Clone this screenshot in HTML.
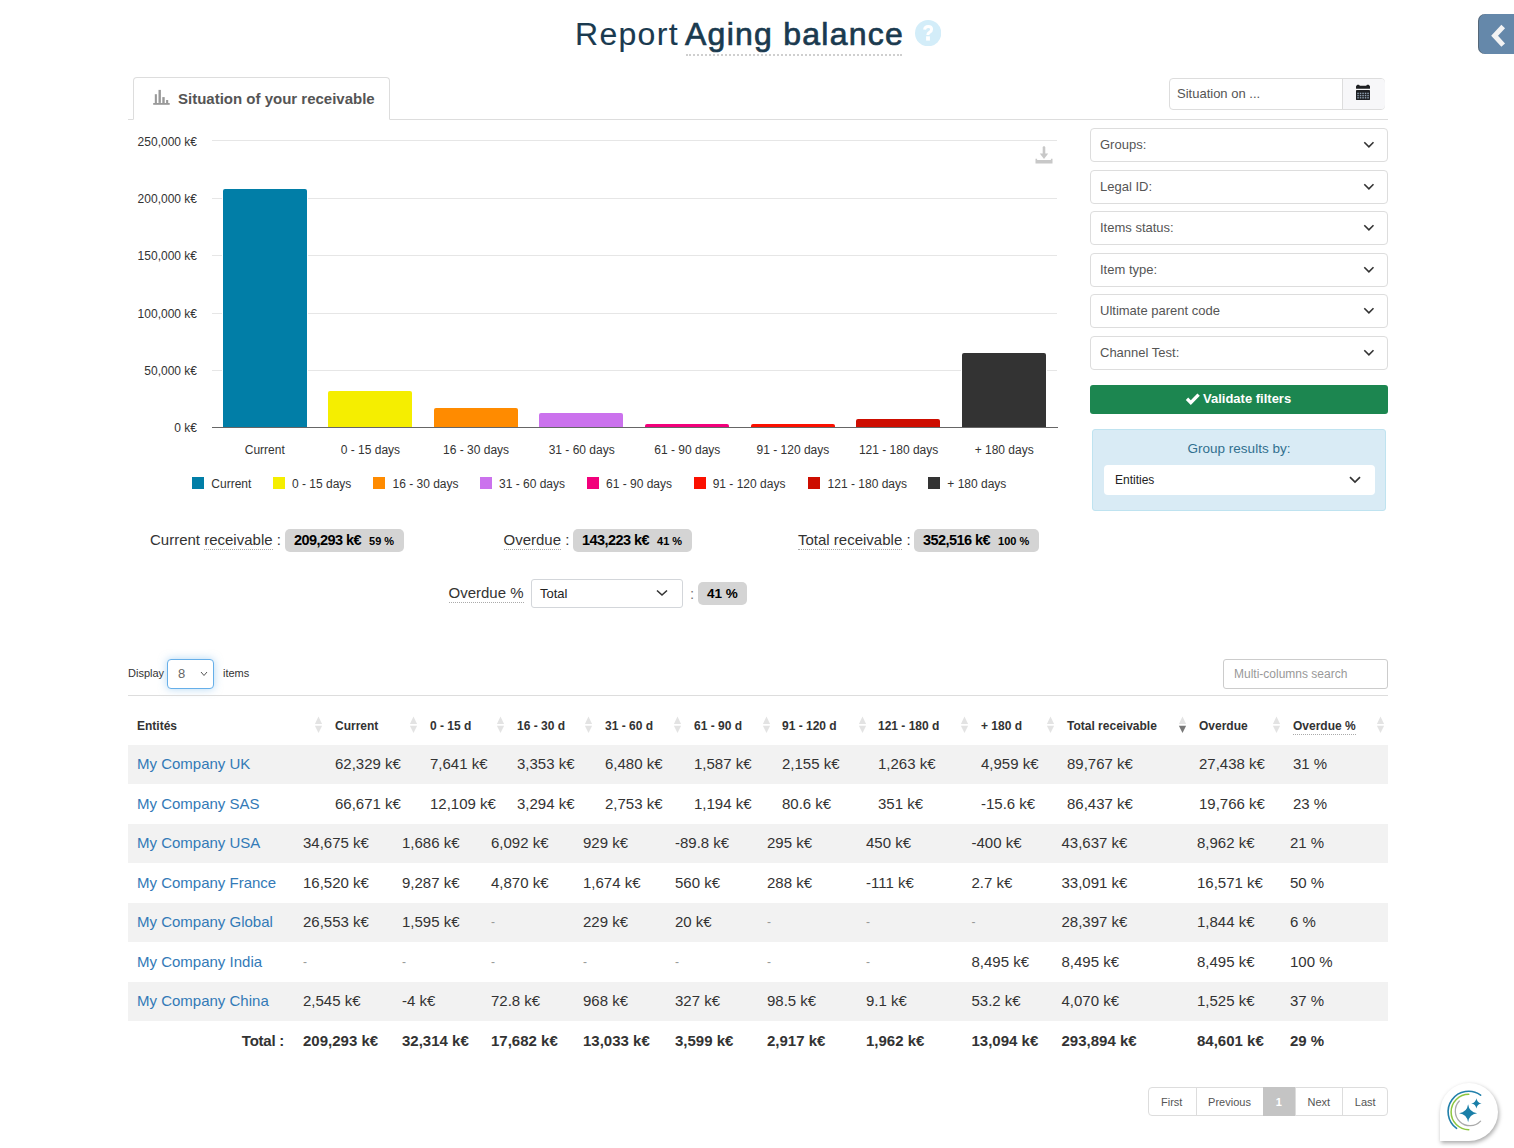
<!DOCTYPE html>
<html><head><meta charset="utf-8">
<style>
*{box-sizing:border-box}
html,body{margin:0;padding:0;width:1514px;height:1148px;overflow:hidden;background:#fff;font-family:"Liberation Sans",sans-serif;color:#333}
.a{position:absolute;white-space:nowrap}
.title{left:578px;top:12px;font-size:32px;color:#1a3a4f;line-height:44px}
.title .r{letter-spacing:1.3px;-webkit-text-stroke:0.12px #1a3a4f}
.title b{font-weight:400;-webkit-text-stroke:0.7px #1a3a4f;letter-spacing:1.25px;}
.help{left:915px;top:20px;width:26px;height:26px;border-radius:50%;background:#d3ecf9;color:#fff;font-weight:700;font-size:19px;text-align:center;line-height:26px}
.toggle{left:1478px;top:14px;width:40px;height:40px;background:#6588aa;border-radius:7px 0 0 7px;box-shadow:inset 1px 0 0 rgba(70,70,70,.5)}
.tab{left:133px;top:77px;width:257px;height:43px;border:1px solid #ddd;border-bottom:1px solid #fff;border-radius:4px 4px 0 0;background:#fff}
.tabline{left:128px;top:119px;width:1260px;height:1px;background:#ddd}
.tabtxt{left:178px;top:90px;font-size:15px;font-weight:700;color:#555;line-height:18px}
.sit{left:1169px;top:78px;width:216px;height:32px;border:1px solid #ddd;border-radius:4px;background:#fff}
.sit .t{position:absolute;left:7px;top:7px;font-size:13px;color:#555}
.sit .cal{position:absolute;left:172px;top:0;width:43px;height:30px;border-left:1px solid #ddd;background:#f7f7f9;border-radius:0 4px 4px 0}
.flt{left:1090px;width:298px;height:34px;border:1px solid #ddd;border-radius:4px;background:#fff}
.flt .t{position:absolute;left:9px;top:8px;font-size:13px;color:#555}
.chev{position:absolute}
.validate{left:1090px;top:385px;width:298px;height:29px;background:#1c8650;border-radius:3px;color:#fff;font-weight:700;font-size:13px;text-align:center;line-height:29px}
.grp{left:1092px;top:429px;width:294px;height:82px;background:#d9ebf5;border:1px solid #bfe3f0;border-radius:3px}
.grp .t{position:absolute;left:0;width:100%;text-align:center;top:11px;font-size:13.5px;color:#31708f}
.grp .sel{position:absolute;left:11px;top:35px;width:271px;height:30px;background:#fff;border-radius:4px}
.grp .sel .t2{position:absolute;left:11px;top:8px;font-size:12px;color:#222}
.ylab{font-size:12px;color:#333;text-align:right;width:80px;left:117px;line-height:14px}
.grid{left:212px;width:845px;height:1px;background:#e6e6e6}
.bar{border-radius:2px 2px 0 0;box-shadow:0 0 0 1px #fff}
.xlab{font-size:12px;color:#333;text-align:center;width:106px;line-height:14px;top:443px}
.leg{font-size:12px;color:#333;top:477px;line-height:14px}
.sq{top:477px;width:12px;height:12px}
.lbl{font-size:15px;color:#333;line-height:18px}
.dot{border-bottom:1px dotted #aaa;padding-bottom:1px}
.badge{height:23px;background:#d4d4d4;border-radius:5px;color:#000;font-weight:700;font-size:13.5px;line-height:23px;padding:0 9px}
.badge small{font-size:11px;margin-left:8px}
.th{top:719px;font-size:12px;font-weight:700;color:#333;line-height:15px}
.td{font-size:15px;color:#333;line-height:18px}
.td.b{font-weight:700}
.lnk{color:#337ab7}
.dash{color:#999;font-size:12px}
</style></head><body>

<div class="a title" style="left:575px"><span class="r">Report</span></div><div class="a title" style="left:685px"><b>Aging balance</b></div><div class="a" style="left:686px;top:54px;width:216px;height:2px;border-top:2px dotted #cfcfcf"></div>
<svg class="a" style="left:915px;top:20px" width="26.3" height="26.3" viewBox="0 0 26.3 26.3"><circle cx="13.15" cy="13.15" r="13.15" fill="#d3edf9"/><path d="M9.6 9.6 Q9.9 6.4 13.2 6.4 Q16.6 6.4 16.6 9.3 Q16.6 11.2 14.6 12.3 Q12.8 13.4 12.8 15" stroke="#fff" stroke-width="3" fill="none"/><rect x="11.1" y="16.3" width="3.8" height="4.3" fill="#fff"/></svg>
<div class="a toggle"><svg width="36" height="40" style="position:absolute;left:0;top:0"><path d="M25.2 12.5 L16.6 21.8 L25.2 31.1" stroke="#f3f3f3" stroke-width="5" fill="none" stroke-linejoin="miter"/></svg></div>

<div class="a tabline"></div>
<div class="a tab"></div>
<svg class="a" style="left:148px;top:84px" width="30" height="26" viewBox="0 0 30 26"><g fill="#999"><rect x="5.2" y="19" width="16.5" height="1.8"/><rect x="6.8" y="10.2" width="2.1" height="9"/><rect x="10.5" y="5.9" width="2.4" height="13"/><rect x="14.3" y="13.1" width="2.4" height="6"/><rect x="18.1" y="16" width="2.1" height="3"/></g></svg>
<div class="a tabtxt">Situation of your receivable</div>

<div class="a sit"><span class="t">Situation on ...</span><div class="cal">
<svg style="position:absolute;left:12px;top:5px" width="16" height="17" viewBox="0 0 16 17"><g fill="#1d1f22"><rect x="1" y="1.8" width="14" height="3" rx="0.6"/><rect x="1.6" y="0.8" width="3" height="2" rx="1"/><rect x="11.4" y="0.8" width="3" height="2" rx="1"/><rect x="1" y="6" width="14" height="10" rx="0.4"/></g><g fill="#8fa0b0" transform="translate(1,0)"><rect x="1.30" y="8.7" width="1.5" height="1.4"/><rect x="1.30" y="10.9" width="1.5" height="1.4"/><rect x="1.30" y="13.1" width="1.5" height="1.4"/><rect x="3.80" y="8.7" width="1.5" height="1.4"/><rect x="3.80" y="10.9" width="1.5" height="1.4"/><rect x="3.80" y="13.1" width="1.5" height="1.4"/><rect x="6.30" y="8.7" width="1.5" height="1.4"/><rect x="6.30" y="10.9" width="1.5" height="1.4"/><rect x="6.30" y="13.1" width="1.5" height="1.4"/><rect x="8.80" y="8.7" width="1.5" height="1.4"/><rect x="8.80" y="10.9" width="1.5" height="1.4"/><rect x="8.80" y="13.1" width="1.5" height="1.4"/><rect x="11.30" y="8.7" width="1.5" height="1.4"/><rect x="11.30" y="10.9" width="1.5" height="1.4"/><rect x="11.30" y="13.1" width="1.5" height="1.4"/></g></svg>
</div></div>

<!-- chart -->
<div class="a ylab" style="top:135.3px">250,000 k€</div>
<div class="a grid" style="top:140px"></div>
<div class="a ylab" style="top:192.4px">200,000 k€</div>
<div class="a grid" style="top:198px"></div>
<div class="a ylab" style="top:249.4px">150,000 k€</div>
<div class="a grid" style="top:255px"></div>
<div class="a ylab" style="top:307.4px">100,000 k€</div>
<div class="a grid" style="top:313px"></div>
<div class="a ylab" style="top:364.4px">50,000 k€</div>
<div class="a grid" style="top:370px"></div>
<div class="a ylab" style="top:421px">0 k€</div>
<div class="a bar" style="left:223px;top:188.8px;width:84px;height:238.2px;background:#017ea7"></div>
<div class="a xlab" style="left:211.8px">Current</div>
<div class="a bar" style="left:328px;top:390.5px;width:84px;height:36.5px;background:#f5ee00"></div>
<div class="a xlab" style="left:317.4px">0 - 15 days</div>
<div class="a bar" style="left:434px;top:407.6px;width:84px;height:19.4px;background:#ff8b00"></div>
<div class="a xlab" style="left:423.1px">16 - 30 days</div>
<div class="a bar" style="left:539px;top:412.9px;width:84px;height:14.1px;background:#cb72ed"></div>
<div class="a xlab" style="left:528.7px">31 - 60 days</div>
<div class="a bar" style="left:645px;top:423.9px;width:84px;height:3.1px;background:#f2007b"></div>
<div class="a xlab" style="left:634.3px">61 - 90 days</div>
<div class="a bar" style="left:751px;top:423.9px;width:84px;height:3.1px;background:#fb1000"></div>
<div class="a xlab" style="left:739.9px">91 - 120 days</div>
<div class="a bar" style="left:856px;top:418.6px;width:84px;height:8.4px;background:#cd0d00"></div>
<div class="a xlab" style="left:845.6px">121 - 180 days</div>
<div class="a bar" style="left:962px;top:353.1px;width:84px;height:73.9px;background:#333333"></div>
<div class="a xlab" style="left:951.2px">+ 180 days</div>
<div class="a" style="left:212px;top:426.5px;width:846px;height:1px;background:#666"></div>
<div class="a sq" style="left:192px;background:#017ea7"></div>
<div class="a leg" style="left:211.3px">Current</div>
<div class="a sq" style="left:273px;background:#f5ee00"></div>
<div class="a leg" style="left:292px">0 - 15 days</div>
<div class="a sq" style="left:373px;background:#ff8b00"></div>
<div class="a leg" style="left:392.5px">16 - 30 days</div>
<div class="a sq" style="left:480px;background:#cb72ed"></div>
<div class="a leg" style="left:499px">31 - 60 days</div>
<div class="a sq" style="left:587px;background:#f2007b"></div>
<div class="a leg" style="left:606px">61 - 90 days</div>
<div class="a sq" style="left:694px;background:#fb1000"></div>
<div class="a leg" style="left:712.7px">91 - 120 days</div>
<div class="a sq" style="left:808px;background:#cd0d00"></div>
<div class="a leg" style="left:827.6px">121 - 180 days</div>
<div class="a sq" style="left:928px;background:#333333"></div>
<div class="a leg" style="left:947.3px">+ 180 days</div>
<svg class="a" style="left:1034px;top:146px" width="20" height="18" viewBox="0 0 20 18"><g fill="#c8c8c8"><rect x="8.7" y="0.3" width="2.6" height="9" rx="1.2"/><path d="M5.8 7.6 H14.2 L10 13 Z"/><path d="M1.5 12.8 H3.1 V14 H16.9 V12.8 H18.5 V17.4 H1.5 Z"/></g></svg>
<!-- filters -->
<div class="a flt" style="top:128px"><span class="t">Groups:</span><svg class="chev" style="left:271.5px;top:12px" width="12" height="8" viewBox="0 0 12 8"><path d="M1.3 1.3 L5.9 5.8 L10.5 1.3" stroke="#333" stroke-width="1.6" fill="none"/></svg></div>
<div class="a flt" style="top:170px"><span class="t">Legal ID:</span><svg class="chev" style="left:271.5px;top:12px" width="12" height="8" viewBox="0 0 12 8"><path d="M1.3 1.3 L5.9 5.8 L10.5 1.3" stroke="#333" stroke-width="1.6" fill="none"/></svg></div>
<div class="a flt" style="top:211px"><span class="t">Items status:</span><svg class="chev" style="left:271.5px;top:12px" width="12" height="8" viewBox="0 0 12 8"><path d="M1.3 1.3 L5.9 5.8 L10.5 1.3" stroke="#333" stroke-width="1.6" fill="none"/></svg></div>
<div class="a flt" style="top:253px"><span class="t">Item type:</span><svg class="chev" style="left:271.5px;top:12px" width="12" height="8" viewBox="0 0 12 8"><path d="M1.3 1.3 L5.9 5.8 L10.5 1.3" stroke="#333" stroke-width="1.6" fill="none"/></svg></div>
<div class="a flt" style="top:294px"><span class="t">Ultimate parent code</span><svg class="chev" style="left:271.5px;top:12px" width="12" height="8" viewBox="0 0 12 8"><path d="M1.3 1.3 L5.9 5.8 L10.5 1.3" stroke="#333" stroke-width="1.6" fill="none"/></svg></div>
<div class="a flt" style="top:336px"><span class="t">Channel Test:</span><svg class="chev" style="left:271.5px;top:12px" width="12" height="8" viewBox="0 0 12 8"><path d="M1.3 1.3 L5.9 5.8 L10.5 1.3" stroke="#333" stroke-width="1.6" fill="none"/></svg></div>
<div class="a validate"><svg style="position:absolute;left:95px;top:7px" width="16" height="14" viewBox="0 0 16 14"><path d="M2 6.8 L5.8 10.6 L13.6 2.6" stroke="#fff" stroke-width="3.4" fill="none"/></svg><span style="position:absolute;left:113px;top:0;line-height:28px">Validate filters</span></div>
<div class="a grp"><div class="t">Group results by:</div><div class="sel"><span class="t2">Entities</span><svg class="chev" style="left:245px;top:11px" width="12" height="8" viewBox="0 0 12 8"><path d="M1 1.2 L6 6 L11 1.2" stroke="#333" stroke-width="1.7" fill="none"/></svg></div></div>

<!-- summary+table -->
<div class="a lbl" style="left:150px;top:531px">Current <span class="dot">receivable</span> :</div>
<div class="a badge" style="left:285px;top:529px;width:119px"><span style="font-size:14.5px;letter-spacing:-0.55px">209,293 k€</span><small>59 %</small></div>
<div class="a lbl" style="left:503.5px;top:531px"><span class="dot">Overdue</span> :</div>
<div class="a badge" style="left:573px;top:529px;width:119px"><span style="font-size:14.5px;letter-spacing:-0.55px">143,223 k€</span><small>41 %</small></div>
<div class="a lbl" style="left:798px;top:531px"><span class="dot">Total receivable</span> :</div>
<div class="a badge" style="left:914px;top:529px;width:125px"><span style="font-size:14.5px;letter-spacing:-0.55px">352,516 k€</span><small>100 %</small></div>
<div class="a lbl" style="left:448.5px;top:584px"><span class="dot">Overdue %</span></div>
<div class="a" style="left:531px;top:579px;width:152px;height:29px;border:1px solid #d3d6da;border-radius:3px;background:#fff"><span style="position:absolute;left:8px;top:6px;font-size:13px;color:#222">Total</span><svg style="position:absolute;left:124px;top:9px" width="12" height="8" viewBox="0 0 12 8"><path d="M1 1.5 L6 6 L11 1.5" stroke="#333" stroke-width="1.6" fill="none"/></svg></div>
<div class="a lbl" style="left:690px;top:585px;color:#777">:</div>
<div class="a badge" style="left:698px;top:582px;width:49px;height:23px;line-height:23px;padding:0 0 0 9px">41 %</div>
<div class="a" style="left:128px;top:667px;font-size:11px;color:#333">Display</div>
<div class="a" style="left:167px;top:659px;width:47px;height:30px;border:1px solid #66afe9;border-radius:4px;background:#fff;box-shadow:0 0 8px rgba(102,175,233,.5)"><span style="position:absolute;left:10px;top:6px;font-size:13px;color:#666">8</span><svg style="position:absolute;left:32px;top:11px" width="8" height="6" viewBox="0 0 8 6"><path d="M1 1 L4 4.5 L7 1" stroke="#555" stroke-width="1" fill="none"/></svg></div>
<div class="a" style="left:223px;top:667px;font-size:11px;color:#333">items</div>
<div class="a" style="left:1223px;top:659px;width:165px;height:30px;border:1px solid #ccc;border-radius:3px;background:#fff"><span style="position:absolute;left:10px;top:7px;font-size:12px;color:#999">Multi-columns search</span></div>
<div class="a" style="left:128px;top:695px;width:1260px;height:1px;background:#ddd"></div>
<div class="a th" style="left:137px">Entités</div>
<svg class="a" style="left:314px;top:716px" width="9" height="18" viewBox="0 0 9 18"><path d="M0.9 8 L4.5 0.5 L8.1 8Z" fill="#e3e3e3"/><path d="M0.9 9.7 L4.5 17 L8.1 9.7Z" fill="#e3e3e3"/></svg>
<div class="a th" style="left:335px">Current</div>
<svg class="a" style="left:409px;top:716px" width="9" height="18" viewBox="0 0 9 18"><path d="M0.9 8 L4.5 0.5 L8.1 8Z" fill="#e3e3e3"/><path d="M0.9 9.7 L4.5 17 L8.1 9.7Z" fill="#e3e3e3"/></svg>
<div class="a th" style="left:430px">0 - 15 d</div>
<svg class="a" style="left:496px;top:716px" width="9" height="18" viewBox="0 0 9 18"><path d="M0.9 8 L4.5 0.5 L8.1 8Z" fill="#e3e3e3"/><path d="M0.9 9.7 L4.5 17 L8.1 9.7Z" fill="#e3e3e3"/></svg>
<div class="a th" style="left:517px">16 - 30 d</div>
<svg class="a" style="left:584px;top:716px" width="9" height="18" viewBox="0 0 9 18"><path d="M0.9 8 L4.5 0.5 L8.1 8Z" fill="#e3e3e3"/><path d="M0.9 9.7 L4.5 17 L8.1 9.7Z" fill="#e3e3e3"/></svg>
<div class="a th" style="left:605px">31 - 60 d</div>
<svg class="a" style="left:673px;top:716px" width="9" height="18" viewBox="0 0 9 18"><path d="M0.9 8 L4.5 0.5 L8.1 8Z" fill="#e3e3e3"/><path d="M0.9 9.7 L4.5 17 L8.1 9.7Z" fill="#e3e3e3"/></svg>
<div class="a th" style="left:694px">61 - 90 d</div>
<svg class="a" style="left:762px;top:716px" width="9" height="18" viewBox="0 0 9 18"><path d="M0.9 8 L4.5 0.5 L8.1 8Z" fill="#e3e3e3"/><path d="M0.9 9.7 L4.5 17 L8.1 9.7Z" fill="#e3e3e3"/></svg>
<div class="a th" style="left:782px">91 - 120 d</div>
<svg class="a" style="left:858px;top:716px" width="9" height="18" viewBox="0 0 9 18"><path d="M0.9 8 L4.5 0.5 L8.1 8Z" fill="#e3e3e3"/><path d="M0.9 9.7 L4.5 17 L8.1 9.7Z" fill="#e3e3e3"/></svg>
<div class="a th" style="left:878px">121 - 180 d</div>
<svg class="a" style="left:960px;top:716px" width="9" height="18" viewBox="0 0 9 18"><path d="M0.9 8 L4.5 0.5 L8.1 8Z" fill="#e3e3e3"/><path d="M0.9 9.7 L4.5 17 L8.1 9.7Z" fill="#e3e3e3"/></svg>
<div class="a th" style="left:981px">+ 180 d</div>
<svg class="a" style="left:1046px;top:716px" width="9" height="18" viewBox="0 0 9 18"><path d="M0.9 8 L4.5 0.5 L8.1 8Z" fill="#e3e3e3"/><path d="M0.9 9.7 L4.5 17 L8.1 9.7Z" fill="#e3e3e3"/></svg>
<div class="a th" style="left:1067px">Total receivable</div>
<svg class="a" style="left:1178px;top:716px" width="9" height="18" viewBox="0 0 9 18"><path d="M0.9 8 L4.5 0.5 L8.1 8Z" fill="#e3e3e3"/><path d="M0.9 9.7 L4.5 17 L8.1 9.7Z" fill="#777"/></svg>
<div class="a th" style="left:1199px">Overdue</div>
<svg class="a" style="left:1272px;top:716px" width="9" height="18" viewBox="0 0 9 18"><path d="M0.9 8 L4.5 0.5 L8.1 8Z" fill="#e3e3e3"/><path d="M0.9 9.7 L4.5 17 L8.1 9.7Z" fill="#e3e3e3"/></svg>
<div class="a th" style="left:1293px"><span class="dot">Overdue %</span></div>
<svg class="a" style="left:1376px;top:716px" width="9" height="18" viewBox="0 0 9 18"><path d="M0.9 8 L4.5 0.5 L8.1 8Z" fill="#e3e3e3"/><path d="M0.9 9.7 L4.5 17 L8.1 9.7Z" fill="#e3e3e3"/></svg>
<div class="a" style="left:128px;top:745px;width:1260px;height:39px;background:#f2f2f2"></div>
<div class="a td lnk" style="left:137px;top:755px">My Company UK</div>
<div class="a td" style="left:335px;top:755px">62,329 k€</div>
<div class="a td" style="left:430px;top:755px">7,641 k€</div>
<div class="a td" style="left:517px;top:755px">3,353 k€</div>
<div class="a td" style="left:605px;top:755px">6,480 k€</div>
<div class="a td" style="left:694px;top:755px">1,587 k€</div>
<div class="a td" style="left:782px;top:755px">2,155 k€</div>
<div class="a td" style="left:878px;top:755px">1,263 k€</div>
<div class="a td" style="left:981px;top:755px">4,959 k€</div>
<div class="a td" style="left:1067px;top:755px">89,767 k€</div>
<div class="a td" style="left:1199px;top:755px">27,438 k€</div>
<div class="a td" style="left:1293px;top:755px">31 %</div>
<div class="a td lnk" style="left:137px;top:795px">My Company SAS</div>
<div class="a td" style="left:335px;top:795px">66,671 k€</div>
<div class="a td" style="left:430px;top:795px">12,109 k€</div>
<div class="a td" style="left:517px;top:795px">3,294 k€</div>
<div class="a td" style="left:605px;top:795px">2,753 k€</div>
<div class="a td" style="left:694px;top:795px">1,194 k€</div>
<div class="a td" style="left:782px;top:795px">80.6 k€</div>
<div class="a td" style="left:878px;top:795px">351 k€</div>
<div class="a td" style="left:981px;top:795px">-15.6 k€</div>
<div class="a td" style="left:1067px;top:795px">86,437 k€</div>
<div class="a td" style="left:1199px;top:795px">19,766 k€</div>
<div class="a td" style="left:1293px;top:795px">23 %</div>
<div class="a" style="left:128px;top:824px;width:1260px;height:39px;background:#f2f2f2"></div>
<div class="a td lnk" style="left:137px;top:834px">My Company USA</div>
<div class="a td" style="left:303px;top:834px">34,675 k€</div>
<div class="a td" style="left:402px;top:834px">1,686 k€</div>
<div class="a td" style="left:491px;top:834px">6,092 k€</div>
<div class="a td" style="left:583px;top:834px">929 k€</div>
<div class="a td" style="left:675px;top:834px">-89.8 k€</div>
<div class="a td" style="left:767px;top:834px">295 k€</div>
<div class="a td" style="left:866px;top:834px">450 k€</div>
<div class="a td" style="left:971.5px;top:834px">-400 k€</div>
<div class="a td" style="left:1061.5px;top:834px">43,637 k€</div>
<div class="a td" style="left:1197px;top:834px">8,962 k€</div>
<div class="a td" style="left:1290px;top:834px">21 %</div>
<div class="a td lnk" style="left:137px;top:874px">My Company France</div>
<div class="a td" style="left:303px;top:874px">16,520 k€</div>
<div class="a td" style="left:402px;top:874px">9,287 k€</div>
<div class="a td" style="left:491px;top:874px">4,870 k€</div>
<div class="a td" style="left:583px;top:874px">1,674 k€</div>
<div class="a td" style="left:675px;top:874px">560 k€</div>
<div class="a td" style="left:767px;top:874px">288 k€</div>
<div class="a td" style="left:866px;top:874px">-111 k€</div>
<div class="a td" style="left:971.5px;top:874px">2.7 k€</div>
<div class="a td" style="left:1061.5px;top:874px">33,091 k€</div>
<div class="a td" style="left:1197px;top:874px">16,571 k€</div>
<div class="a td" style="left:1290px;top:874px">50 %</div>
<div class="a" style="left:128px;top:903px;width:1260px;height:39px;background:#f2f2f2"></div>
<div class="a td lnk" style="left:137px;top:913px">My Company Global</div>
<div class="a td" style="left:303px;top:913px">26,553 k€</div>
<div class="a td" style="left:402px;top:913px">1,595 k€</div>
<div class="a td dash" style="left:491px;top:913px">-</div>
<div class="a td" style="left:583px;top:913px">229 k€</div>
<div class="a td" style="left:675px;top:913px">20 k€</div>
<div class="a td dash" style="left:767px;top:913px">-</div>
<div class="a td dash" style="left:866px;top:913px">-</div>
<div class="a td dash" style="left:971.5px;top:913px">-</div>
<div class="a td" style="left:1061.5px;top:913px">28,397 k€</div>
<div class="a td" style="left:1197px;top:913px">1,844 k€</div>
<div class="a td" style="left:1290px;top:913px">6 %</div>
<div class="a td lnk" style="left:137px;top:953px">My Company India</div>
<div class="a td dash" style="left:303px;top:953px">-</div>
<div class="a td dash" style="left:402px;top:953px">-</div>
<div class="a td dash" style="left:491px;top:953px">-</div>
<div class="a td dash" style="left:583px;top:953px">-</div>
<div class="a td dash" style="left:675px;top:953px">-</div>
<div class="a td dash" style="left:767px;top:953px">-</div>
<div class="a td dash" style="left:866px;top:953px">-</div>
<div class="a td" style="left:971.5px;top:953px">8,495 k€</div>
<div class="a td" style="left:1061.5px;top:953px">8,495 k€</div>
<div class="a td" style="left:1197px;top:953px">8,495 k€</div>
<div class="a td" style="left:1290px;top:953px">100 %</div>
<div class="a" style="left:128px;top:982px;width:1260px;height:39px;background:#f2f2f2"></div>
<div class="a td lnk" style="left:137px;top:992px">My Company China</div>
<div class="a td" style="left:303px;top:992px">2,545 k€</div>
<div class="a td" style="left:402px;top:992px">-4 k€</div>
<div class="a td" style="left:491px;top:992px">72.8 k€</div>
<div class="a td" style="left:583px;top:992px">968 k€</div>
<div class="a td" style="left:675px;top:992px">327 k€</div>
<div class="a td" style="left:767px;top:992px">98.5 k€</div>
<div class="a td" style="left:866px;top:992px">9.1 k€</div>
<div class="a td" style="left:971.5px;top:992px">53.2 k€</div>
<div class="a td" style="left:1061.5px;top:992px">4,070 k€</div>
<div class="a td" style="left:1197px;top:992px">1,525 k€</div>
<div class="a td" style="left:1290px;top:992px">37 %</div>
<div class="a td b" style="left:128px;width:156px;text-align:right;top:1032px;letter-spacing:-0.25px">Total :</div>
<div class="a td b" style="left:303px;top:1032px">209,293 k€</div>
<div class="a td b" style="left:402px;top:1032px">32,314 k€</div>
<div class="a td b" style="left:491px;top:1032px">17,682 k€</div>
<div class="a td b" style="left:583px;top:1032px">13,033 k€</div>
<div class="a td b" style="left:675px;top:1032px">3,599 k€</div>
<div class="a td b" style="left:767px;top:1032px">2,917 k€</div>
<div class="a td b" style="left:866px;top:1032px">1,962 k€</div>
<div class="a td b" style="left:971.5px;top:1032px">13,094 k€</div>
<div class="a td b" style="left:1061.5px;top:1032px">293,894 k€</div>
<div class="a td b" style="left:1197px;top:1032px">84,601 k€</div>
<div class="a td b" style="left:1290px;top:1032px">29 %</div>
<div class="a pag" style="left:1148px;top:1087px;width:240px;height:29px;border:1px solid #ddd;border-radius:4px;background:#fff"></div>
<div class="a" style="left:1148px;top:1087px;width:47.5px;height:29px;text-align:center;line-height:31px;font-size:11px;color:#555">First</div>
<div class="a" style="left:1195.5px;top:1087px;width:67.0px;height:29px;border-left:1px solid #ddd;text-align:center;line-height:31px;font-size:11px;color:#555">Previous</div>
<div class="a" style="left:1262.5px;top:1087px;width:32.5px;height:29px;background:#c4c4c4;text-align:center;line-height:31px;font-size:11px;font-weight:700;color:#fff">1</div>
<div class="a" style="left:1295px;top:1087px;width:46.5px;height:29px;border-left:1px solid #ddd;text-align:center;line-height:31px;font-size:11px;color:#555">Next</div>
<div class="a" style="left:1341.5px;top:1087px;width:46.5px;height:29px;border-left:1px solid #ddd;text-align:center;line-height:31px;font-size:11px;color:#555">Last</div>
<div class="a" style="left:1440px;top:1083px;width:58px;height:58px;background:#fff;border-radius:29px 29px 29px 0;box-shadow:1px 2px 4px rgba(0,0,0,.35)">
<svg style="position:absolute;left:0;top:0" width="58" height="58" viewBox="0 0 58 58"><path d="M40.6 12.2 A20.2 20.2 0 1 0 16.6 45.4" stroke="#2280ab" stroke-width="1.6" fill="none" stroke-linecap="round"/><path d="M28.8 11.3 A17.7 17.7 0 0 0 28.8 46.7" stroke="#8dc63f" stroke-width="1.5" fill="none" stroke-linecap="round"/><path d="M19.3 18 A14.4 14.4 0 1 0 40.6 38.1" stroke="#aaa" stroke-width="1.3" fill="none" stroke-linecap="round"/>
<path d="M28.1 21.2 Q29.18 29.12 37.1 30.2 Q29.18 31.28 28.1 39.2 Q27.02 31.28 19.1 30.2 Q27.02 29.12 28.1 21.2Z" fill="#1a7fa8"/><path d="M36.4 15.2 Q37.02 19.78 41.6 20.4 Q37.02 21.02 36.4 25.599999999999998 Q35.78 21.02 31.2 20.4 Q35.78 19.78 36.4 15.2Z" fill="#1a7fa8"/></svg></div>
</body></html>
